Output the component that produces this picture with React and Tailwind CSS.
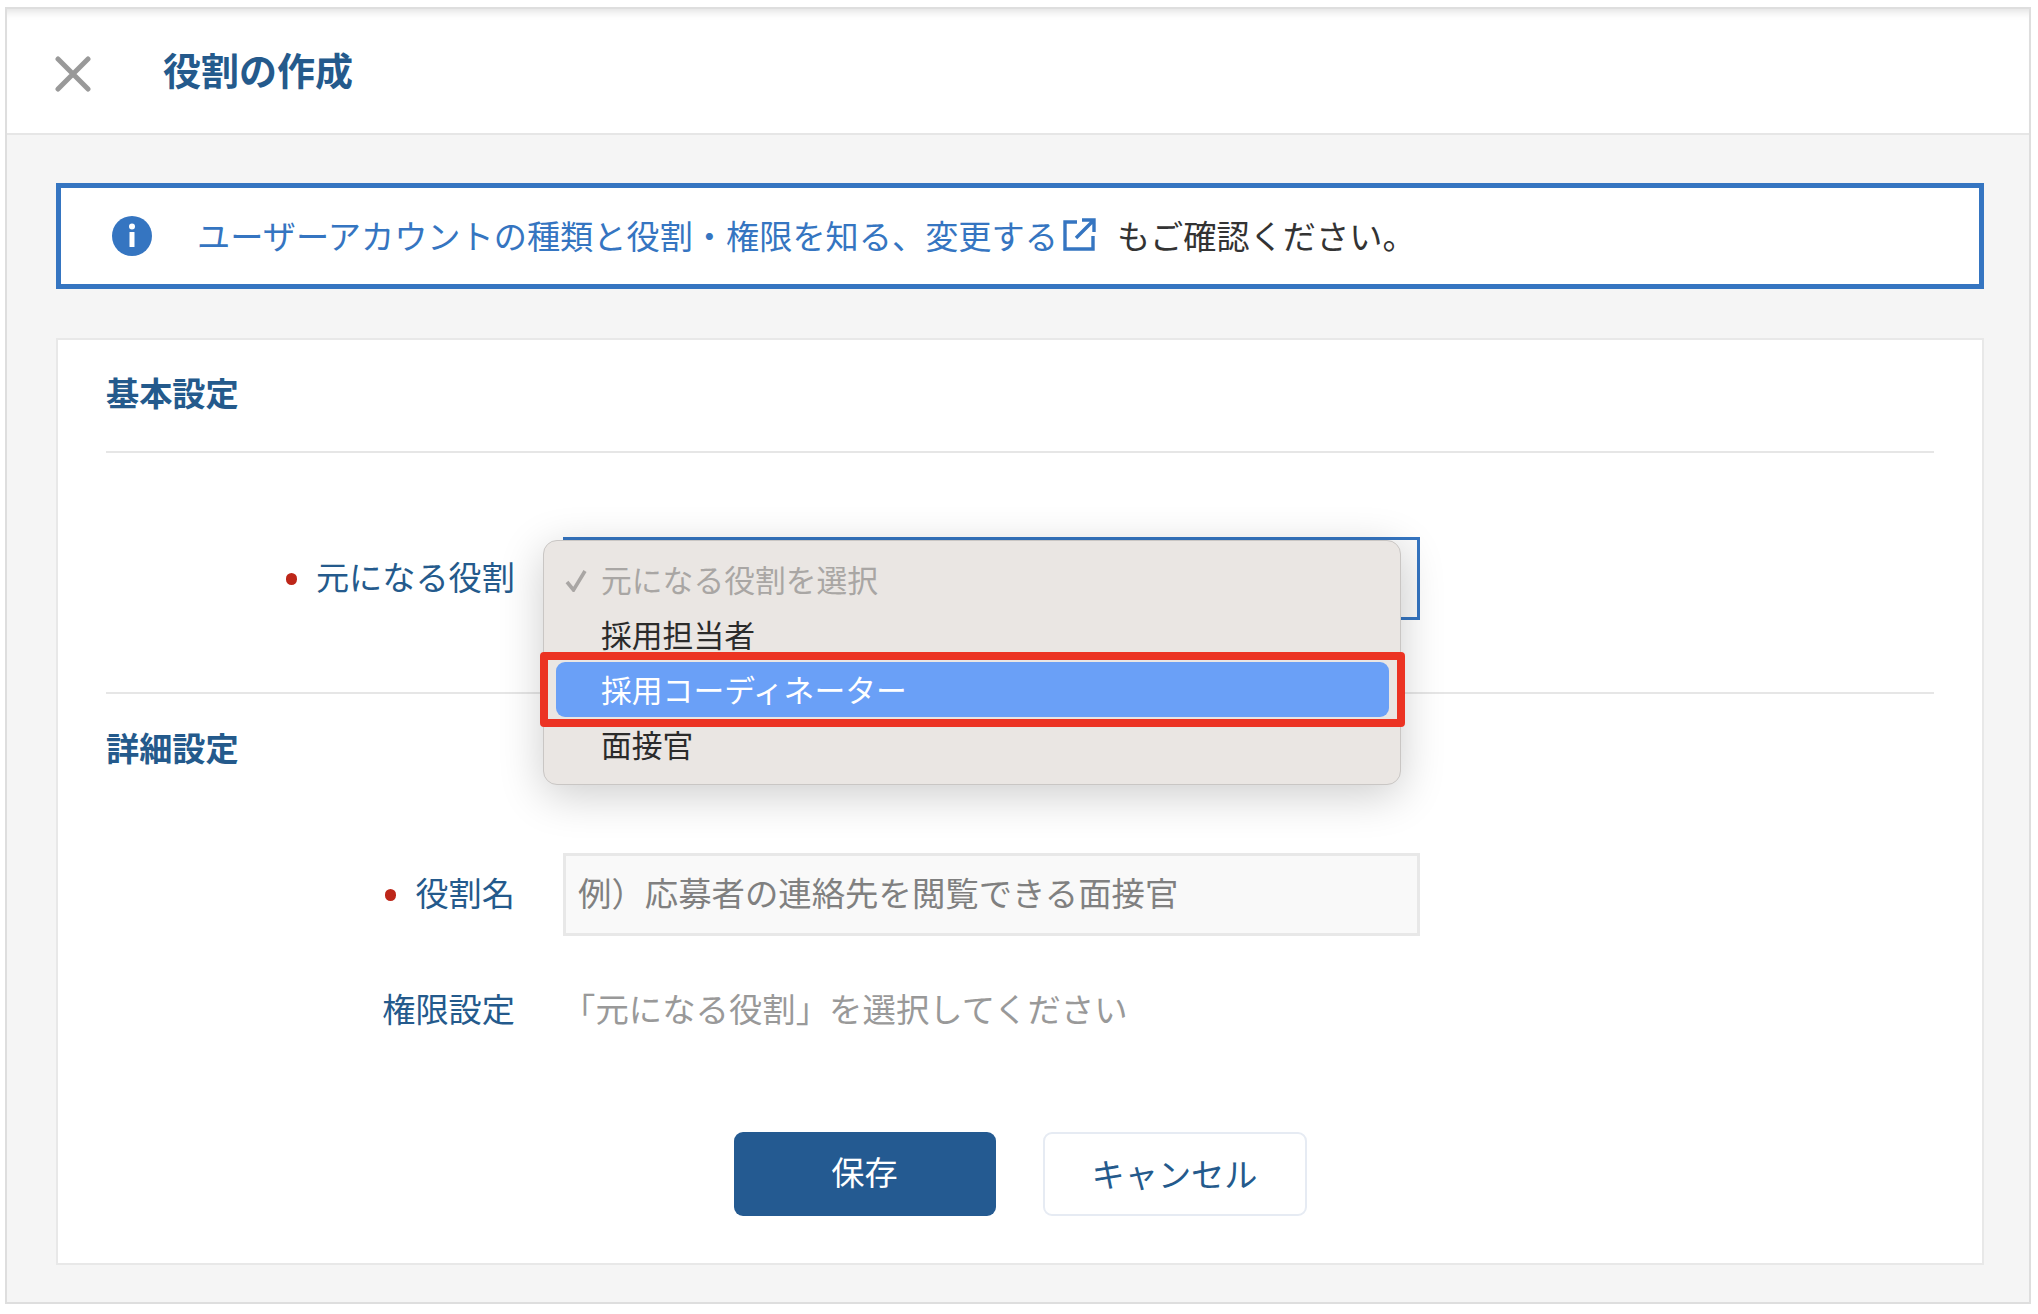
export default function App() {
  return (
    <div className="w-[2038px] h-[1314px] bg-white pt-[7px] pl-[5px] font-['Noto_Sans_CJK_JP','Noto_Sans',sans-serif] text-[33.2px] leading-[40px] overflow-hidden">
      <div className="w-[2026px] h-[1297px] border-2 border-[#dedede] bg-[#f5f5f5] flex flex-col">
        <header className="h-[126px] shrink-0 bg-white border-b-2 border-[#e6e6e6] flex items-center shadow-[inset_0_10px_10px_-8px_rgba(0,0,0,0.14)]">
          <svg className="ml-[48px] mt-[6px] w-[36px] h-[36px]" viewBox="0 0 36 36" fill="none" stroke="#999999" strokeWidth="5" strokeLinecap="round">
            <path d="M3 3 L33 33 M33 3 L3 33" />
          </svg>
          <h1 className="ml-[72px] pb-[5px] text-[38px] leading-[46px] font-bold text-[#245a8c]">役割の作成</h1>
        </header>

        <div className="ml-[49px] mt-[48px] w-[1928px] h-[106px] shrink-0 bg-white border-[5px] border-[#3575c1] flex items-center">
          <svg className="ml-[51px] w-[40px] h-[40px]" viewBox="0 0 40 40">
            <circle cx="20" cy="20" r="20" fill="#3575c1" />
            <circle cx="20" cy="10.5" r="3" fill="#ffffff" />
            <rect x="17.5" y="16" width="5" height="15" rx="0.5" fill="#ffffff" />
          </svg>
          <a className="ml-[45px] pb-[3px] text-[#3575c1] whitespace-nowrap">ユーザーアカウントの種類と役割・権限を知る、変更する</a>
          <svg className="ml-[5px] mb-[3px] w-[33px] h-[33px]" viewBox="0 0 33 33" fill="none" stroke="#3575c1" strokeWidth="3.4">
            <path d="M14 4 H2 V31 H30 V18" />
            <path d="M13 20 L30 3 M19 2 H31 V14" />
          </svg>
          <span className="ml-[21px] pb-[3px] text-[#333333] whitespace-nowrap">もご確認ください。</span>
        </div>

        <main className="ml-[49px] mt-[49px] w-[1928px] h-[927px] shrink-0 bg-white border-2 border-[#e8e8e8] px-[48px]">
          <div className="h-[113px] pt-[32px] border-b-2 border-[#e6e6e6]">
            <h2 className="font-bold text-[#245a8c]">基本設定</h2>
          </div>

          <div className="mt-[84px] flex items-center">
            <label className="w-[409px] flex items-center justify-end gap-[19px] text-[#245a8c]">
              <span className="w-[11px] h-[12px] rounded-full bg-[#bd2619]" />
              <span className="pb-[5px]">元になる役割</span>
            </label>
            <div className="relative ml-[48px] w-[857px] h-[83px] bg-[#fafafa] border-[3px] border-[#3575c1]">
              <div className="absolute left-[-23px] top-0 w-[858px] h-[245px] z-10 bg-[#eae6e3] border border-[#c9c6c4] rounded-[14px] shadow-[0_10px_45px_rgba(0,0,0,0.2)] pt-[11px] text-[30.8px]">
                <div className="relative h-[55px] pl-[57px] pb-[2px] flex items-center text-[#a9a6a4]">
                  <svg className="absolute left-[21px] top-[18px] w-[23px] h-[22px]" viewBox="0 0 23 22" fill="none" stroke="#a9a6a4" strokeWidth="3.6">
                    <path d="M2 12 L8.5 20 L20 1" />
                  </svg>
                  元になる役割を選択
                </div>
                <div className="h-[55px] pl-[57px] pb-[2px] flex items-center text-[#2b2b2b]">採用担当者</div>
                <div className="relative ml-[12px] mr-[11px] h-[55px] pl-[45px] pb-[2px] flex items-center text-white bg-[#6aa0f7] rounded-[9px]">
                  採用コーディネーター
                  <div className="absolute left-[-16px] right-[-16px] top-[-10px] bottom-[-10px] border-[8px] border-[#ec3323] rounded-[4px]" />
                </div>
                <div className="h-[55px] pl-[57px] pb-[2px] flex items-center text-[#2b2b2b]">面接官</div>
              </div>
            </div>
          </div>

          <div className="mt-[72px] border-t-2 border-[#e6e6e6] pt-[33px]">
            <h2 className="font-bold text-[#245a8c]">詳細設定</h2>
          </div>

          <div className="mt-[86px] flex items-center">
            <label className="w-[409px] flex items-center justify-end gap-[19px] text-[#245a8c]">
              <span className="w-[11px] h-[12px] rounded-full bg-[#bd2619]" />
              <span className="pb-[5px]">役割名</span>
            </label>
            <div className="ml-[48px] w-[857px] h-[83px] bg-[#f9f9f9] border-[3px] border-[#e8e8e8] pl-[12px] pb-[5px] flex items-center text-[#808080] whitespace-nowrap text-[33.4px]">
              例）応募者の連絡先を閲覧できる面接官
            </div>
          </div>

          <div className="mt-[52px] flex items-center">
            <label className="w-[409px] text-right text-[#245a8c]">権限設定</label>
            <div className="ml-[47px] text-[#999999] whitespace-nowrap text-[33.4px]">「元になる役割」を選択してください</div>
          </div>

          <div className="mt-[104px] flex justify-center gap-[47px]">
            <button className="w-[262px] h-[84px] rounded-[9px] bg-[#245a91] text-white pb-[6px]">保存</button>
            <button className="w-[264px] h-[84px] rounded-[9px] bg-white border-2 border-[#e6ebf3] text-[#245a8c] pb-[3px]">キャンセル</button>
          </div>
        </main>
      </div>
    </div>
  );
}
